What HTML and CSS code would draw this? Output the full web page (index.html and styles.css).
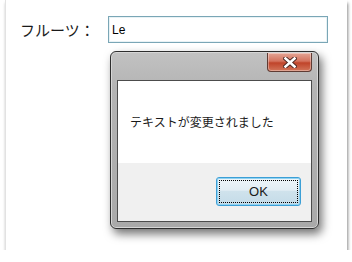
FILE: index.html
```html
<!DOCTYPE html>
<html lang="ja">
<head>
    <meta charset="UTF-8">
    <title>フルーツ</title>
    <link rel="stylesheet" href="styles.css">
</head>
<body>
    <div class="screen">
        <!-- Form -->
        <div class="field-row">
            <label class="field-label" for="fruit">フルーツ：</label>
            <input class="field-input" id="fruit" type="text" value="Le">
        </div>

        <!-- Message box -->
        <div class="dialog">
            <div class="dialog-title">
                <button class="close-btn" aria-label="閉じる">
                    <svg width="14" height="11" viewBox="0 0 14 11">
                        <path d="M2.5 1.5 L11.5 9.5 M11.5 1.5 L2.5 9.5" stroke="#4a2520" stroke-width="4.4" stroke-linecap="square"/>
                        <path d="M2.5 1.5 L11.5 9.5 M11.5 1.5 L2.5 9.5" stroke="#fff" stroke-width="2.6" stroke-linecap="square"/>
                    </svg>
                </button>
            </div>
            <div class="dialog-client">
                <div class="dialog-body">テキストが変更されました</div>
                <div class="dialog-footer">
                    <button class="ok-btn"><span class="ok-focus">OK</span></button>
                </div>
            </div>
        </div>
    </div>
</body>
</html>
```

FILE: styles.css
```css
body {
    margin: 0;
    background: #fff;
    font-family: "Noto Sans CJK JP", "Noto Sans", sans-serif;
}

.screen {
    position: relative;
    margin-left: 5px;
    width: 341px;
    height: 250px;
    background: #fff;
    border-left: 1px solid #e2e2e2;
    box-shadow: 1px 3px 3px rgba(0,0,0,0.45);
}

.field-row {
    display: flex;
    align-items: center;
    padding: 16px 0 0 14px;
    gap: 9px;
}

.field-label {
    font-size: 15px;
    color: #1a1a1a;
    width: 79px;
}

.field-input {
    box-sizing: border-box;
    width: 220px;
    height: 27px;
    margin: 0;
    padding: 0 3px;
    border: 1px solid #7aa6b6;
    box-shadow: inset 0 0 0 1px #e8f2f5;
    font-family: "Liberation Sans", sans-serif;
    font-size: 12px;
    color: #000;
    outline: none;
}

.dialog {
    position: absolute;
    left: 104px;
    top: 51px;
    box-sizing: border-box;
    width: 209px;
    height: 178px;
    padding: 0 6px 6px;
    border: 1px solid #2e2e2e;
    border-radius: 6px;
    background: linear-gradient(to bottom, #c2c2c2 0%, #b4b4b4 20%, #a9a9a9 100%);
    box-shadow: inset 0 0 0 1px #d6d6d6, 3px 5px 10px rgba(0,0,0,0.55);
    display: flex;
    flex-direction: column;
}

.dialog-title {
    position: relative;
    height: 28px;
    flex: none;
}

.close-btn {
    position: absolute;
    right: 0;
    top: 1px;
    width: 45px;
    height: 19px;
    padding: 0;
    border: 1px solid #5f3b33;
    border-top: none;
    border-radius: 0 0 4px 4px;
    background: linear-gradient(to bottom, #e4a595 0%, #d4735e 45%, #c0442a 55%, #d2755a 100%);
    box-shadow: inset 0 0 0 1px rgba(255,255,255,0.35);
    display: flex;
    align-items: center;
    justify-content: center;
}

.dialog-client {
    flex: 1;
    border: 1px solid #4c4c4c;
    background: #fff;
    display: flex;
    flex-direction: column;
}

.dialog-body {
    height: 82px;
    padding-left: 12px;
    box-sizing: border-box;
    padding-top: 32px;
    font-size: 12px;
    line-height: 18px;
    color: #1a1a1a;
}

.dialog-footer {
    flex: 1;
    background: #f0f0f0;
    display: flex;
    justify-content: flex-end;
    align-items: flex-start;
    padding: 14px 10px 0 0;
}

.ok-btn {
    width: 85px;
    height: 29px;
    padding: 2px;
    border: 1px solid #3c9fd6;
    border-radius: 3px;
    background: linear-gradient(to bottom, #eef5f9 0%, #e2edf4 45%, #cfe2ec 50%, #c4dbe8 100%);
    box-shadow: inset 0 0 0 1px #8fd2f2;
    font-family: "Liberation Sans", sans-serif;
    font-size: 13px;
    color: #1a1a1a;
}

.ok-focus {
    display: flex;
    align-items: center;
    justify-content: center;
    height: 100%;
    border: 1px dotted #000;
    box-sizing: border-box;
}
```
